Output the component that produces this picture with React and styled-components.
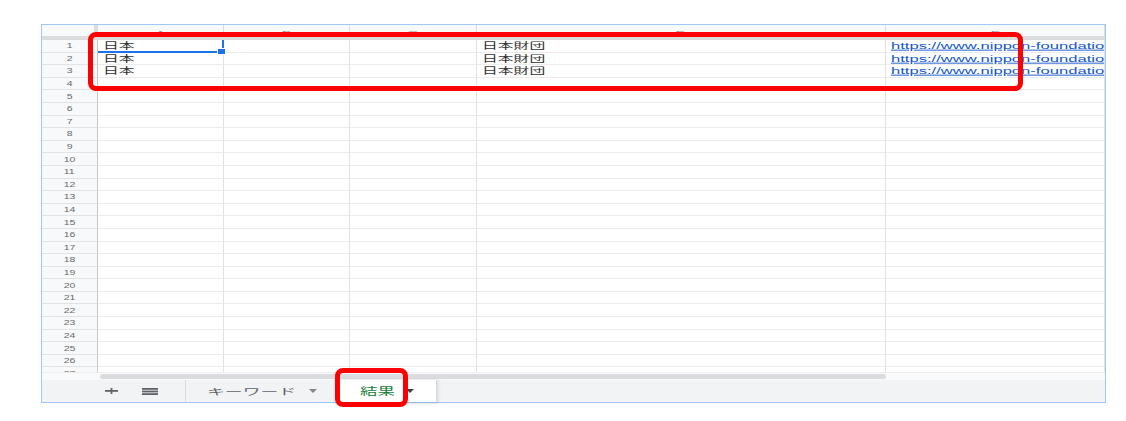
import React from "react";
import styled, { createGlobalStyle } from "styled-components";

const GlobalStyle = createGlobalStyle`
  html, body {
    margin: 0;
    padding: 0;
    background: #ffffff;
    font-family: "Liberation Sans", Arial, "Noto Sans CJK JP", sans-serif;
  }
`;

const Page = styled.div`
  padding: 24px 0 0 41px;
  width: 1126px;
  height: 421px;
  box-sizing: border-box;
`;

const Frame = styled.div`
  position: relative;
  display: flex;
  flex-direction: column;
  width: 1065px;
  height: 379px;
  box-sizing: border-box;
  border: 1px solid #9fc8f6;
  background: #ffffff;
`;

const Grid = styled.div`
  flex: 1;
  overflow: hidden;
  display: flex;
  flex-direction: column;
`;

const HeaderRow = styled.div`
  display: flex;
  flex-shrink: 0;
  height: 11px;
  background: #f8f9fa;
  border-bottom: 4px solid #dcdcdc;
`;

const Corner = styled.div`
  width: 52px;
  flex-shrink: 0;
  border-right: 4px solid #dcdcdc;
  background: #f8f9fa;
`;

const ColHead = styled.div`
  width: ${({ $w }) => $w};
  flex: ${({ $w }) => ($w ? "0 0 auto" : "1")};
  box-sizing: border-box;
  border-right: 1px solid #dcdcdc;
  display: flex;
  align-items: flex-end;
  justify-content: center;
  overflow: hidden;
  color: #8a8a8a;
  font-size: 10px;
  line-height: 1;
`;

const Row = styled.div`
  display: flex;
  flex-shrink: 0;
  height: 12.6px;
`;

const RowHead = styled.div`
  width: 56px;
  flex-shrink: 0;
  box-sizing: border-box;
  background: #f8f9fa;
  border-right: 1px solid #c7c7c7;
  border-bottom: 1px solid #e3e3e3;
  display: flex;
  align-items: center;
  justify-content: center;
  overflow: hidden;
  color: #6a6a6a;
  font-size: 10px;
`;

const Cell = styled.div`
  position: relative;
  width: ${({ $w }) => $w};
  flex: ${({ $w }) => ($w ? "0 0 auto" : "1")};
  box-sizing: border-box;
  border-right: 1px solid #e2e2e2;
  border-bottom: 1px solid #ececec;
  display: flex;
  align-items: center;
  padding-left: 5px;
  padding-top: 1px;
  white-space: nowrap;
  overflow: ${({ $selected }) => ($selected ? "visible" : "hidden")};

  ${({ $selected }) =>
    $selected &&
    `
    &::after {
      content: "";
      position: absolute;
      left: 0;
      top: 0;
      right: -1px;
      bottom: -1px;
      border-right: 2px solid #1a73e8;
      border-bottom: 2px solid #1a73e8;
      pointer-events: none;
    }
    &::before {
      content: "";
      position: absolute;
      right: -3px;
      bottom: -3px;
      width: 7px;
      height: 5px;
      background: #1a73e8;
      border: 1px solid #ffffff;
      z-index: 2;
    }
  `}
`;

const Squeeze = styled.span`
  display: inline-block;
  white-space: nowrap;
  transform: scale(${({ $sx }) => $sx}, ${({ $sy }) => $sy});
  transform-origin: ${({ $origin }) => $origin || "left center"};
`;

const CellText = styled(Squeeze)`
  font-family: "Noto Sans CJK JP", sans-serif;
  font-size: 10px;
  color: #333333;
  line-height: 1;
`;

const LinkText = styled(Squeeze)`
  font-family: "Liberation Sans", Arial, sans-serif;
  font-size: 10px;
  color: #1155cc;
  text-decoration: underline;
  line-height: 1;
`;

const ScrollStrip = styled.div`
  flex-shrink: 0;
  height: 7px;
  background: #fafafa;
  border-top: 1px solid #eeeeee;
  padding-left: 58px;
  display: flex;
  align-items: center;
`;

const ScrollThumb = styled.div`
  width: 786px;
  height: 5px;
  border-radius: 3px;
  background: #dadce0;
`;

const TabBar = styled.div`
  flex-shrink: 0;
  height: 22px;
  background: #f1f3f4;
  display: flex;
  align-items: stretch;
  padding-left: 63px;
`;

const IconButton = styled.div`
  display: flex;
  align-items: center;
  margin-right: ${({ $mr }) => $mr};
`;

const Separator = styled.div`
  width: 1px;
  background: #dadce0;
`;

const Tab = styled.div`
  display: flex;
  align-items: center;
  width: ${({ $w }) => $w};
  box-sizing: border-box;
  padding-left: ${({ $pl }) => $pl};
  background: ${({ $active }) => ($active ? "#ffffff" : "transparent")};
  box-shadow: ${({ $active }) =>
    $active ? "0 1px 3px 1px rgba(60,64,67,0.15)" : "none"};
  border-right: 1px solid #dadce0;
  position: relative;
`;

const TabLabel = styled(Squeeze)`
  font-family: "Noto Sans CJK JP", sans-serif;
  font-size: ${({ $active }) => ($active ? "12px" : "11px")};
  color: ${({ $active }) => ($active ? "#188038" : "#5f6368")};
  line-height: 1;
`;

const Caret = styled.svg`
  margin-left: ${({ $ml }) => $ml};
  flex-shrink: 0;
`;

const Highlight = styled.div`
  position: absolute;
  left: ${({ $l }) => $l}px;
  top: ${({ $t }) => $t}px;
  width: ${({ $w }) => $w}px;
  height: ${({ $h }) => $h}px;
  box-sizing: border-box;
  border: 5px solid #ff0000;
  border-radius: 8px;
  pointer-events: none;
  z-index: 5;
`;

const columns = [
  { key: "A", w: "126px" },
  { key: "B", w: "126px" },
  { key: "C", w: "127px" },
  { key: "D", w: "409px" },
  { key: "E", w: null },
];

const data = {
  1: { A: "日本", D: "日本財団", E: "https://www.nippon-foundation.or.jp/" },
  2: { A: "日本", D: "日本財団", E: "https://www.nippon-foundation.or.jp/" },
  3: { A: "日本", D: "日本財団", E: "https://www.nippon-foundation.or.jp/" },
};

const rows = Array.from({ length: 27 }, (_, i) => i + 1);

const renderValue = (col, value) => {
  if (!value) return null;
  if (col === "E") {
    return (
      <LinkText $sx={1.66} $sy={0.92}>
        {value}
      </LinkText>
    );
  }
  return (
    <CellText $sx={1.58} $sy={0.86}>
      {value}
    </CellText>
  );
};

const App = () => (
  <>
    <GlobalStyle />
    <Page>
      <Frame>
        <Grid>
          <HeaderRow>
            <Corner />
            {columns.map((c) => (
              <ColHead key={c.key} $w={c.w}>
                <Squeeze $sx={1.4} $sy={0.6} $origin="center bottom">
                  {c.key}
                </Squeeze>
              </ColHead>
            ))}
          </HeaderRow>
          {rows.map((r) => (
            <Row key={r}>
              <RowHead>
                <Squeeze $sx={1.05} $sy={0.64} $origin="center center">
                  {r}
                </Squeeze>
              </RowHead>
              {columns.map((c) => (
                <Cell
                  key={c.key}
                  $w={c.w}
                  $selected={r === 1 && c.key === "A"}
                >
                  {renderValue(c.key, data[r] && data[r][c.key])}
                </Cell>
              ))}
            </Row>
          ))}
        </Grid>

        <ScrollStrip>
          <ScrollThumb />
        </ScrollStrip>

        <TabBar>
          <IconButton $mr="24px">
            <svg width="13" height="6" viewBox="0 0 13 6">
              <rect x="0" y="2" width="13" height="1.8" fill="#5f6368" />
              <rect x="5.6" y="0" width="1.8" height="6" fill="#5f6368" />
            </svg>
          </IconButton>
          <IconButton $mr="27px">
            <svg width="16" height="7" viewBox="0 0 16 7">
              <rect x="0" y="0" width="16" height="1.8" fill="#5f6368" />
              <rect x="0" y="2.6" width="16" height="1.8" fill="#5f6368" />
              <rect x="0" y="5.2" width="16" height="1.8" fill="#5f6368" />
            </svg>
          </IconButton>
          <Separator />
          <Tab $w="151px" $pl="21px">
            <TabLabel $sx={1.62} $sy={0.8}>
              キーワード
            </TabLabel>
            <Caret $ml="47px" width="8" height="4" viewBox="0 0 8 4">
              <path d="M0 0 L8 0 L4 4 Z" fill="#80868b" />
            </Caret>
          </Tab>
          <Tab $active $w="100px" $pl="23px">
            <TabLabel $active $sx={1.45} $sy={0.85}>
              結果
            </TabLabel>
            <Caret $ml="22px" width="8" height="4" viewBox="0 0 8 4">
              <path d="M0 0 L8 0 L4 4 Z" fill="#3c4043" />
            </Caret>
          </Tab>
        </TabBar>

        <Highlight $l={46} $t={7} $w={935} $h={59} />
        <Highlight $l={293} $t={343} $w={73} $h={39} />
      </Frame>
    </Page>
  </>
);

export default App;
